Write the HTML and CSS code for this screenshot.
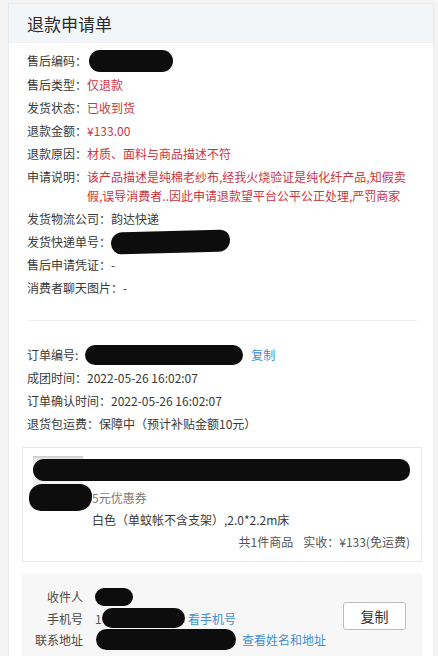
FILE: index.html
```html
<!DOCTYPE html>
<html lang="zh-CN">
<head>
<meta charset="utf-8">
<title>退款申请单</title>
<link rel="stylesheet" href="styles.css">
</head>
<body>
<div class="card">
  <div class="card-head">退款申请单</div>
  <div class="card-body">
    <div class="info-block refund">
      <div class="row row-first"><span class="label">售后编码：</span><span class="mask mask-code"></span></div>
      <div class="row"><span class="label">售后类型：</span><span class="val red">仅退款</span></div>
      <div class="row"><span class="label">发货状态：</span><span class="val red">已收到货</span></div>
      <div class="row"><span class="label">退款金额：</span><span class="val red">¥133.00</span></div>
      <div class="row"><span class="label">退款原因：</span><span class="val red">材质、面料与商品描述不符</span></div>
      <div class="row multi"><span class="label">申请说明：</span><span class="val red para">该产品描述是纯棉老纱布,经我火烧验证是纯化纤产品,知假卖<br>假,误导消费者..因此申请退款望平台公平公正处理,严罚商家</span></div>
      <div class="row"><span class="label">发货物流公司：</span><span class="val">韵达快递</span></div>
      <div class="row"><span class="label">发货快递单号：</span><span class="mask mask-express"></span></div>
      <div class="row"><span class="label">售后申请凭证：</span><span class="val">-</span></div>
      <div class="row"><span class="label">消费者聊天图片：</span><span class="val">-</span></div>
    </div>
    <div class="divider"></div>
    <div class="info-block order">
      <div class="row"><span class="label">订单编号:</span><span class="mask mask-order"></span><a class="link link-copy">复制</a></div>
      <div class="row"><span class="label">成团时间：</span><span class="val">2022-05-26 16:02:07</span></div>
      <div class="row"><span class="label">订单确认时间：</span><span class="val">2022-05-26 16:02:07</span></div>
      <div class="row"><span class="label">退货包运费：</span><span class="val">保障中（预计补贴金额10元）</span></div>
    </div>
    <div class="goods-box">
      <div class="goods-row">
        <div class="thumb"><span class="thumb-mask"></span></div>
        <div class="goods-info">
          <div class="title-mask"></div>
          <div class="coupon">5元优惠券</div>
          <div class="sku">白色（单蚊帐不含支架）,2.0*2.2m床</div>
        </div>
      </div>
      <div class="summary"><span>共1件商品</span><span class="paid">实收：¥133(免运费)</span></div>
    </div>
    <div class="address-box">
      <div class="addr-rows">
        <div class="addr-row"><span class="addr-label">收件人</span><span class="addr-val"><span class="mask mask-name"></span></span></div>
        <div class="addr-row"><span class="addr-label">手机号</span><span class="addr-val"><span class="digit">1</span><span class="mask mask-phone"></span><a class="link link-phone">看手机号</a></span></div>
        <div class="addr-row"><span class="addr-label">联系地址</span><span class="addr-val"><span class="mask mask-addr"></span><a class="link link-addr">查看姓名和地址</a></span></div>
      </div>
      <button class="copy-btn" type="button">复制</button>
    </div>
  </div>
</div>
</body>
</html>
```
FILE: styles.css
```css
* { box-sizing: border-box; }
html, body {
  margin: 0;
  padding: 0;
}
body {
  background: #f4f4f4;
  font-family: "Noto Sans CJK SC", "Microsoft YaHei", sans-serif;
  font-size: 12px;
  color: #3a3a3a;
  height: 656px;
  overflow: hidden;
}
.card {
  margin: 3px 4px 0 8px;
  background: #fff;
  border: 1px solid #eaeaea;
  border-bottom: none;
  min-height: 700px;
}
.card-head {
  height: 39px;
  line-height: 39px;
  padding-left: 18px;
  font-size: 17px;
  color: #2b2b2b;
  background: #f3f6f9;
  border-bottom: 1px solid #eef1f4;
}
.card-body {
  padding: 0 11px 0 13px;
}
.info-block {
  padding: 0 5px;
}
.refund {
  padding-top: 5px;
}
.order {
  padding-top: 22px;
}
.row {
  display: flex;
  align-items: flex-start;
  line-height: 23px;
  white-space: nowrap;
}
.row-first {
  line-height: 25px;
  align-items: center;
}
.label {
  color: #3a3a3a;
  flex: none;
}
.val {
  color: #3a3a3a;
}
.red {
  color: #c9363f;
}
.multi .para {
  line-height: 19px;
  padding: 2px 0;
}
.mask {
  display: inline-block;
  background: #0d0d0d;
  border-radius: 11px;
  align-self: center;
}
.mask-code {
  width: 84px;
  height: 22px;
  margin-left: 2px;
}
.mask-express {
  width: 119px;
  height: 22px;
  border-radius: 12px 10px 12px 11px;
  transform: rotate(-1.5deg);
}
.mask-order {
  width: 158px;
  height: 20px;
  margin-left: 7px;
}
.link {
  color: #3f8fd3;
  cursor: pointer;
}
.link-copy {
  margin-left: 8px;
}
.divider {
  height: 1px;
  background: #eeeeee;
  margin: 21px 5px 0 6px;
}
.goods-box {
  margin-top: 12px;
  border: 1px solid #e8e8e8;
  padding: 8px 11px 8px 10px;
}
.goods-row {
  display: flex;
  align-items: flex-start;
}
.thumb {
  position: relative;
  flex: none;
  width: 50px;
  height: 54px;
  background: linear-gradient(#c9c9c9 0, #e9e9e9 3px, #f2f2f2 60%, #e6e6e6 100%);
}
.thumb-mask {
  position: absolute;
  left: -4px;
  top: 28px;
  width: 63px;
  height: 27px;
  background: #0d0d0d;
  border-radius: 13px 12px 14px 12px;
}
.goods-info {
  flex: 1;
  margin-left: 9px;
  min-width: 0;
}
.title-mask {
  position: relative;
  z-index: 1;
  height: 22px;
  margin: 3px 0 0 -59px;
  background: #0d0d0d;
  border-radius: 12px 11px 11px 12px;
}
.coupon {
  margin-top: 6px;
  line-height: 22px;
  color: #7a7a7a;
}
.sku {
  line-height: 22px;
  color: #3a3a3a;
  white-space: nowrap;
}
.summary {
  display: flex;
  justify-content: flex-end;
  gap: 10px;
  line-height: 22px;
  color: #555;
}
.address-box {
  margin-top: 12px;
  background: #f7f7f7;
  display: flex;
  align-items: center;
  justify-content: space-between;
  padding: 12px 16px 20px 0;
}
.addr-row {
  display: flex;
  align-items: center;
  line-height: 21.5px;
  height: 21.5px;
  white-space: nowrap;
}
.addr-label {
  width: 61px;
  text-align: right;
  color: #4a4a4a;
  flex: none;
}
.addr-val {
  display: flex;
  align-items: center;
  margin-left: 12px;
}
.digit {
  color: #555;
  width: 7px;
}
.mask-name {
  width: 38px;
  height: 18px;
  border-radius: 9px;
}
.mask-phone {
  width: 83px;
  height: 20px;
  border-radius: 10px;
}
.link-phone {
  margin-left: 3px;
}
.mask-addr {
  width: 140px;
  height: 21px;
  margin-left: 1px;
}
.link-addr {
  margin-left: 6px;
}
.copy-btn {
  width: 63px;
  height: 28px;
  background: #fff;
  border: 1px solid #bdbdbd;
  border-radius: 3px;
  font-family: "Noto Sans CJK SC", sans-serif;
  font-size: 14px;
  color: #333;
  padding: 0;
  margin-top: -4px;
}
```
